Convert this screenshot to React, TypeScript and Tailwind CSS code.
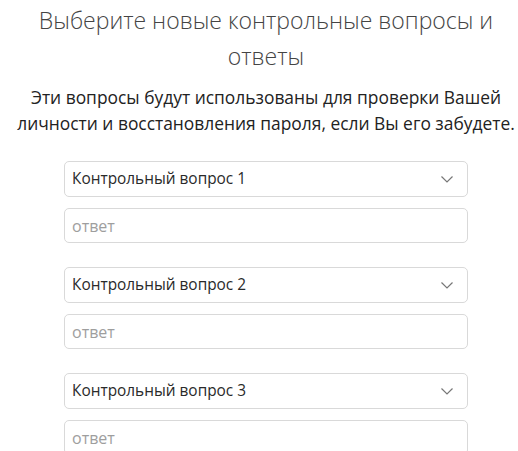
// --- 型定義 ---
interface QuestionBlock {
  id: number;
  label: string;
}

const questions: QuestionBlock[] = [
  { id: 1, label: 'Контрольный вопрос 1' },
  { id: 2, label: 'Контрольный вопрос 2' },
  { id: 3, label: 'Контрольный вопрос 3' },
];

export default function App() {
  return (
    <div className="min-h-screen bg-white pl-[14px] font-['Open_Sans',sans-serif] overflow-hidden">
      <h1 className="pt-[2px] text-center text-[23px] font-light leading-[36px] text-[#444]">
        Выберите новые контрольные вопросы и
        <br />
        ответы
      </h1>
      <p className="mt-[10px] text-center text-[17.4px] leading-[26px] text-[#222]">
        Эти вопросы будут использованы для проверки Вашей
        <br />
        личности и восстановления пароля, если Вы его забудете.
      </p>

      {/* フォーム */}
      <div className="mx-auto mt-[25px] flex w-[404px] flex-col gap-[24px]">
        {questions.map((q) => (
          <div key={q.id} className="flex flex-col gap-[11px]">
            <div className="flex h-[36px] items-center justify-between rounded-[5px] border border-[#d9d9d9] pl-[7px] pr-[14px]">
              <span className="text-[15.4px] text-[#2a2a2a]">{q.label}</span>
              <svg width="12" height="7" viewBox="0 0 12 7" fill="none" className="text-[#777]">
                <polyline points="0.5,0.5 6,6 11.5,0.5" stroke="currentColor" strokeWidth="1.2" />
              </svg>
            </div>
            <input
              type="text"
              placeholder="ответ"
              className="h-[35px] w-full rounded-[5px] border border-[#d9d9d9] px-[7px] text-[16px] text-[#333] outline-none placeholder:text-[#9e9e9e]"
            />
          </div>
        ))}
      </div>
    </div>
  );
}
